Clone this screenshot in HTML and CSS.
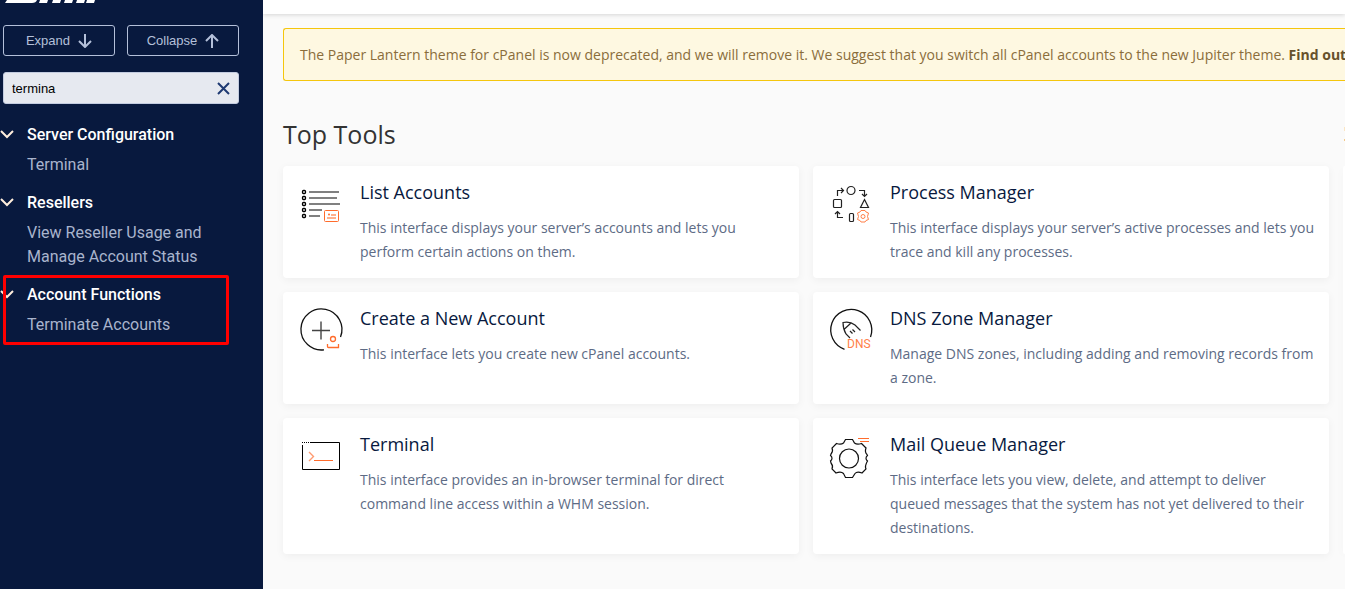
FILE: index.html
```html
<!DOCTYPE html>
<html lang="en">

<head>
    <meta charset="UTF-8">
    <meta name="viewport" content="width=device-width, initial-scale=1">
    <title>WHM</title>
    <link rel="stylesheet" href="styles.css">
</head>

<body>

    <aside class="sidebar">
        <svg class="logo" width="96" height="4" viewBox="0 0 96 4" role="img" aria-label="WHM">
            <path fill="#fff" d="M5 0H35Q34 3 30 3H3ZM38 0H46L45 3H37ZM51 0H59L58 3H50ZM63 0H71L70 3H62ZM75 0H83L82 3H74ZM85 0H93L92 3H84Z" />
        </svg>

        <div class="tree-buttons">
            <button type="button">Expand
                <svg width="14" height="14" viewBox="0 0 14 14"><path d="M7 0V13M1 7L7 13L13 7" /></svg>
            </button>
            <button type="button">Collapse
                <svg width="14" height="14" viewBox="0 0 14 14"><path d="M7 14V1M1 7L7 1L13 7" /></svg>
            </button>
        </div>

        <div class="search">
            <input type="text" value="termina" aria-label="Search tools">
            <button type="button" aria-label="Clear search">
                <svg width="13" height="13" viewBox="0 0 13 13"><path d="M1 1L12 12M12 1L1 12" /></svg>
            </button>
        </div>

        <nav class="menu">
            <section>
                <h2><svg width="14" height="10" viewBox="0 0 14 10"><path d="M1 1L7 7L13 1" /></svg>Server Configuration</h2>
                <a href="#">Terminal</a>
            </section>
            <section>
                <h2><svg width="14" height="10" viewBox="0 0 14 10"><path d="M1 1L7 7L13 1" /></svg>Resellers</h2>
                <a href="#">View Reseller Usage and Manage Account Status</a>
            </section>
            <section class="marked">
                <h2><svg width="14" height="10" viewBox="0 0 14 10"><path d="M1 1L7 7L13 1" /></svg>Account Functions</h2>
                <a href="#">Terminate Accounts</a>
            </section>
        </nav>
    </aside>

    <div class="page">
        <header class="topbar"></header>

        <main>
            <div class="notice">The Paper Lantern theme for cPanel is now deprecated, and we will remove it. We suggest that you switch all cPanel accounts to the new Jupiter theme. <a href="#">Find out</a></div>

            <div class="title">
                <h1>Top Tools</h1>
                <svg width="1" height="18" viewBox="0 0 1 18"><path fill="#fbe6c4" d="M0 2H1V6H0Z" /><path fill="#f3c98a" d="M0 14H1V16H0Z" /></svg>
            </div>

            <div class="tools">
                <article class="card">
                    <svg class="icon" width="44" height="44" viewBox="0 0 44 44">
                        <g stroke="#000" stroke-width="1.3">
                            <rect x="3.5" y="4.5" width="3" height="3" rx="1" />
                            <rect x="3.5" y="10.5" width="3" height="3" rx="1" />
                            <rect x="3.5" y="16.5" width="3" height="3" rx="1" />
                            <rect x="3.5" y="22.5" width="3" height="3" rx="1" />
                            <rect x="3.5" y="28.5" width="3" height="3" rx="1" />
                        </g>
                        <path stroke="#808080" stroke-width="2" d="M10 6H40M10 12H38M10 18H41M10 24H23M10 30H21" />
                        <rect x="25.5" y="24.5" width="14" height="11" rx="1" stroke="#ff6c2c" />
                        <path stroke="#ffb08c" stroke-width="2" d="M32 29H37M28 32H37" />
                        <circle cx="30" cy="28.5" r="1" fill="#ff6c2c" />
                    </svg>
                    <div>
                        <h3><a href="#">List Accounts</a></h3>
                        <p>This interface displays your server’s accounts and lets you perform certain actions on them.</p>
                    </div>
                </article>

                <article class="card">
                    <svg class="icon" width="44" height="44" viewBox="0 0 44 44">
                        <g stroke="#222" stroke-width="1.2">
                            <circle cx="22" cy="4.5" r="4" />
                            <path d="M8.5 10V4.500H14M12 2L14.500 4.500L12 7M30 4.500H35.500V10M33 8L35.500 10.500L38 8" />
                            <rect x="4.5" y="13.5" width="8" height="8" rx="1" />
                            <path d="M35.500 13.500L39.500 21.500H31.500Z" />
                            <path d="M14 31.500H8.500V26M6 28L8.500 25.500L11 28" />
                            <rect x="20.5" y="27.5" width="4" height="8" rx="1" />
                        </g>
                        <g stroke="#ff7f48">
                            <path d="M32 24.500H36L37 26L39.500 27L38.500 30.500L39.500 33.500L37 34.500L36 36H32L31 34.500L28.500 33.500L29.500 30.500L28.500 27L31 26Z" />
                            <circle cx="34" cy="30.5" r="2" />
                        </g>
                    </svg>
                    <div>
                        <h3><a href="#">Process Manager</a></h3>
                        <p>This interface displays your server’s active processes and lets you trace and kill any processes.</p>
                    </div>
                </article>

                <article class="card">
                    <svg class="icon" width="44" height="44" viewBox="0 4 44 44">
                        <path stroke="#111" stroke-width="1.3" d="M41.500 29A20.500 20.500 0 1 0 25 41.800" />
                        <path stroke="#444" stroke-width="1.400" d="M22 13.500V31.500M13 22.500H31" />
                        <g stroke="#ff6c2c" stroke-width="1.3">
                            <circle cx="34" cy="31" r="2.5" />
                            <path d="M28.500 36V38.500Q28.500 39.500 29.500 39.500H39.500V36" />
                        </g>
                    </svg>
                    <div>
                        <h3><a href="#">Create a New Account</a></h3>
                        <p>This interface lets you create new cPanel accounts.</p>
                    </div>
                </article>

                <article class="card">
                    <svg class="icon" width="44" height="44" viewBox="0 4 44 44">
                        <path stroke="#111" stroke-width="1.3" d="M41.500 29A20.500 20.500 0 1 0 15.500 41.300" />
                        <path stroke="#222" stroke-width="1.2" d="M21 30L17 26Q14 21 14 14.500Q21 13 26 17L31.500 22.500M15.500 21L22 15M21 23L23.500 25.500M23.500 21.500L26 24" />
                        <text x="18" y="40" class="icon-text">DNS</text>
                    </svg>
                    <div>
                        <h3><a href="#">DNS Zone Manager</a></h3>
                        <p>Manage DNS zones, including adding and removing records from a zone.</p>
                    </div>
                </article>

                <article class="card">
                    <svg class="icon" width="44" height="44" viewBox="0 -2 44 44">
                        <path stroke="#000" d="M3.500 5V29.500H40.500V2.500H11" />
                        <path stroke="#000" stroke-dasharray="1 1" d="M3 2.500H11" />
                        <path stroke="#ff9a70" stroke-width="1.4" d="M10 12L14.500 16.500L10 21" />
                        <path stroke="#ff6c2c" d="M15 20.500H34" />
                    </svg>
                    <div>
                        <h3><a href="#">Terminal</a></h3>
                        <p>This interface provides an in-browser terminal for direct command line access within a WHM session.</p>
                    </div>
                </article>

                <article class="card">
                    <svg class="icon" width="44" height="44" viewBox="0 -1 44 44">
                        <g stroke="#111" stroke-width="1.2">
                            <path d="M16.500 .5H23.500L25.500 4Q28 6 32.500 4.500L37 9Q35.500 13 38 15.500L38.500 16.500Q35.500 19 38.500 22Q35.500 27 37 30L33 34Q28 32 26 34.500L23.500 38.500H16.500L14.500 34.500Q12 32 7 34L3 30Q4.500 27 2 24L1.500 22Q4.500 19 1.500 16.500L2 15Q4.500 12 3 9L7.500 4.500Q12 6 14.500 4Z" />
                            <circle cx="20" cy="19.5" r="9.5" />
                        </g>
                        <path stroke="#ff6c2c" d="M29 -.5H40M31 2.500H40" />
                    </svg>
                    <div>
                        <h3><a href="#">Mail Queue Manager</a></h3>
                        <p>This interface lets you view, delete, and attempt to deliver queued messages that the system has not yet delivered to their destinations.</p>
                    </div>
                </article>

                <div class="side-panel"></div>
            </div>
        </main>
    </div>

</body>

</html>
```

FILE: styles.css
```css
* {
    box-sizing: border-box;
}

body {
    margin: 0;
    display: flex;
    min-height: 100vh;
    background-color: #fafafa;
    font-family: "Open Sans", sans-serif;
    font-size: 14px;
    line-height: 24px;
}

svg {
    fill: none;
    flex: none;
}

a {
    color: inherit;
    text-decoration: none;
}

h1, h2, h3, p {
    margin: 0;
}

/* sidebar */
.sidebar {
    flex: none;
    width: 263px;
    padding: 0 24px 0 3px;
    background-color: #08193e;
    color: #a9b4cd;
    font-family: Roboto, sans-serif;
}

.logo {
    display: block;
    margin-left: -1px;
}

.tree-buttons {
    display: flex;
    gap: 12px;
    margin-top: 21px;
}

.tree-buttons button {
    flex: 1;
    display: flex;
    align-items: center;
    justify-content: center;
    gap: 8px;
    height: 31px;
    padding: 0;
    border: 1px solid #b4c0da;
    border-radius: 3px;
    background: none;
    color: #b4c0da;
    font: 13px "Liberation Sans", sans-serif;
}

.tree-buttons svg {
    stroke: #b4c0da;
    stroke-width: 2;
}

.search {
    display: flex;
    align-items: center;
    height: 32px;
    margin-top: 16px;
    padding: 0 8px;
    border: 1px solid #c3cce0;
    border-radius: 3px;
    background-color: #e6e9f0;
}

.search input {
    flex: 1;
    min-width: 0;
    padding: 0;
    border: 0;
    background: none;
    color: #000;
    font: 13px "Liberation Sans", sans-serif;
}

.search button {
    display: flex;
    padding: 0;
    border: 0;
    background: none;
}

.search svg {
    stroke: #1f3a73;
    stroke-width: 2;
}

.menu {
    margin-top: 19px;
    font-size: 16px;
}

.menu section {
    position: relative;
    margin-bottom: 14px;
}

.menu h2 {
    display: flex;
    align-items: center;
    gap: 13px;
    margin: 0 0 6px -3px;
    color: #fff;
    font-size: 16px;
    font-weight: 500;
}

.menu h2 svg {
    stroke: #ffeedd;
    stroke-width: 2;
}

.menu a {
    display: block;
    padding: 0 20px 0 24px;
}

/* red frame over the section */
.marked::after {
    content: "";
    position: absolute;
    inset: -8px 10px -8px 0;
    border: 3px solid #f00;
    border-radius: 2px;
}

/* page */
.page {
    flex: 1;
    min-width: 0;
    overflow: hidden;
}

.topbar {
    height: 14px;
    background-color: #fff;
    box-shadow: 0 1px 4px rgba(0, 0, 0, .15);
}

main {
    padding: 14px 0 34px 20px;
}

.notice {
    height: 53px;
    padding: 14px 0 0 16px;
    border: 1px solid #f5c60d;
    border-right: 0;
    border-radius: 3px 0 0 3px;
    background-color: #fef8e1;
    color: #8a6d3b;
    white-space: nowrap;
}

.notice a {
    color: #66512c;
    font-weight: 700;
}

.title {
    display: flex;
    align-items: center;
    justify-content: space-between;
    margin: 37px 0 16px;
}

.title h1 {
    color: #333;
    font-size: 25px;
    font-weight: 400;
    line-height: 32px;
}

.tools {
    display: grid;
    grid-template-columns: 1fr 1fr 2px;
    gap: 14px;
}

.card {
    display: flex;
    gap: 17px;
    min-height: 112px;
    padding: 14px 12px 14px 16px;
    border-radius: 4px;
    background-color: #fff;
    box-shadow: 0 2px 8px rgba(0, 0, 0, .05);
}

.card h3 {
    margin-bottom: 12px;
    color: #08193e;
    font-size: 18px;
    font-weight: 400;
}

.card p {
    color: #5d6b85;
}

.icon {
    margin-top: 6px;
    overflow: visible;
}

.icon-text {
    fill: #ff7f48;
    font-family: Roboto, sans-serif;
    font-size: 12px;
}

.side-panel {
    grid-area: 1 / 3 / 4 / 4;
    border-radius: 4px 0 0 4px;
    background-color: #fff;
    box-shadow: 0 2px 8px rgba(0, 0, 0, .05);
}
```
